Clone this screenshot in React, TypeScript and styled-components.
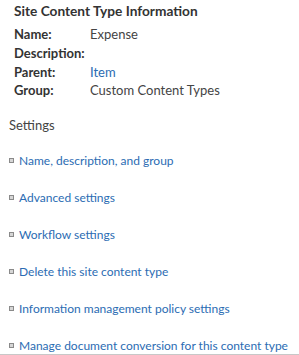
import React from "react";
import styled, { createGlobalStyle } from "styled-components";

const Global = createGlobalStyle`
  html, body { margin: 0; padding: 0; background: #fff; }
  body { font-family: "Lato", "Open Sans", Arial, sans-serif; }
`;

const Page = styled.div`
  width: 299px;
  height: 355px;
  box-sizing: border-box;
  border-bottom: 1px solid #c8c8c8;
  overflow: hidden;
  padding: 2px 0 0 0;
`;

const Info = styled.section`
  padding-left: 14px;
`;

const Title = styled.h3`
  margin: 0 0 5px 0;
  font-size: 13.7px;
  font-weight: 700;
  color: #333;
  line-height: 18px;
`;

const Grid = styled.div`
  display: grid;
  grid-template-columns: 76px 1fr;
  font-size: 13px;
  line-height: 18.8px;
`;

const Label = styled.div`
  font-weight: 700;
  color: #333;
  white-space: nowrap;
`;

const Value = styled.div<{ $link?: boolean }>`
  color: ${(p) => (p.$link ? "#2b6cb3" : "#444")};
`;

const Settings = styled.section`
  padding-left: 9px;
  margin-top: 16px;
`;

const Heading = styled.div`
  font-size: 13px;
  color: #444;
  line-height: 18px;
  margin-bottom: 17px;
`;

const List = styled.ul`
  list-style: none;
  margin: 0;
  padding: 0;
  display: flex;
  flex-direction: column;
  gap: 19px;
`;

const Item = styled.li`
  display: flex;
  align-items: center;
  gap: 5px;
  height: 18px;
  font-size: 12px;
  color: #2b6cb3;
  white-space: nowrap;
`;

const Bullet = styled.span`
  width: 5px;
  height: 5px;
  box-sizing: border-box;
  border: 1px solid #8a8a8a;
  background: #d6d6d6;
  flex: none;
`;

const items = [
  "Name, description, and group",
  "Advanced settings",
  "Workflow settings",
  "Delete this site content type",
  "Information management policy settings",
  "Manage document conversion for this content type",
];

export default function App() {
  return (
    <>
      <Global />
      <Page>
        <Info>
          <Title>Site Content Type Information</Title>
          <Grid>
            <Label>Name:</Label>
            <Value>Expense</Value>
            <Label>Description:</Label>
            <Value />
            <Label>Parent:</Label>
            <Value $link>Item</Value>
            <Label>Group:</Label>
            <Value>Custom Content Types</Value>
          </Grid>
        </Info>
        <Settings>
          <Heading>Settings</Heading>
          <List>
            {items.map((t) => (
              <Item key={t}>
                <Bullet />
                {t}
              </Item>
            ))}
          </List>
        </Settings>
      </Page>
    </>
  );
}
